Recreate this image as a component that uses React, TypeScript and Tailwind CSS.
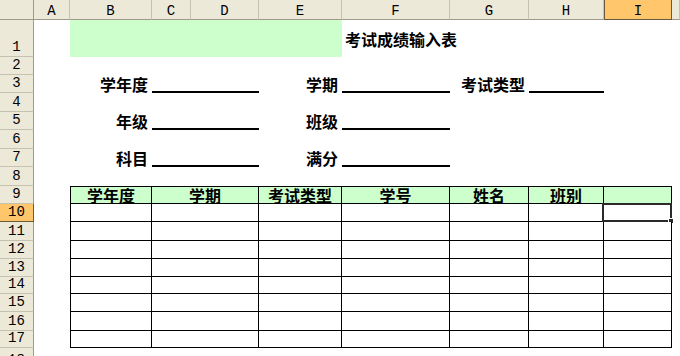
import React from "react";

const colHdr =
  "bg-[#ece9d8] border-r border-b border-r-[#c5c2b2] border-b-[#9d9a8c] flex items-center justify-center text-[14px] leading-none text-black pt-[2px]";
const colHdrSel =
  "bg-[#ffc66b] border-r border-b border-l border-l-[#6b5a3a] border-r-[#6b5a3a] border-b-[#6b5a3a] flex items-center justify-center text-[14px] leading-none text-black pt-[2px]";
const rowHdr =
  "bg-[#ece9d8] border-r border-b border-r-[#9d9a8c] border-b-[#c5c2b2] flex items-end justify-center text-[14px] leading-none text-black pb-[2px]";
const rowHdrSel =
  "bg-[#ffc66b] border-r border-b border-r-[#6b5a3a] border-b-[#6b5a3a] flex items-end justify-center text-[14px] leading-none text-black pb-[2px]";

const label =
  "flex items-end justify-end pr-[4px] text-[16px] leading-[16px] font-bold whitespace-nowrap text-black pb-[1px]";
const line = "border-b-2 border-black";
const th =
  "bg-[#ccffcc] border-t border-r border-b border-black flex items-center justify-center text-[16px] leading-[16px] font-bold text-black whitespace-nowrap";
const td = "border-r border-b border-black bg-white";

const latin = { fontFamily: '"Liberation Mono", "DejaVu Sans Mono", monospace' };

function RH({ n, sel }: { n: number; sel?: boolean }) {
  return (
    <div className={sel ? rowHdrSel : rowHdr} style={latin}>
      {n}
    </div>
  );
}

export default function App() {
  const letters = ["A", "B", "C", "D", "E", "F", "G", "H"];
  const dataRows = [10, 11, 12, 13, 14, 15, 16, 17];
  return (
    <div
      className="w-[680px] h-[356px] overflow-hidden bg-white grid grid-cols-[34px_36px_82px_39px_68px_83px_108px_79px_75px_68px_8px] grid-rows-[20px_37px_18px_18px_19px_18px_19px_18px_19px_18px_18px_19px_18px_18px_17px_18px_19px_17px_8px]"
      style={{ fontFamily: '"Noto Sans CJK SC", "Noto Sans", sans-serif' }}
    >
      {/* column header row */}
      <div className="bg-[#ece9d8] border-r border-b border-r-[#9d9a8c] border-b-[#9d9a8c]" />
      {letters.map((l) => (
        <div key={l} className={colHdr} style={latin}>
          {l}
        </div>
      ))}
      <div className={colHdrSel} style={latin}>
        I
      </div>
      <div className={colHdr} />

      {/* row 1 */}
      <RH n={1} />
      <div />
      <div className="col-span-4 bg-[#ccffcc]" />
      <div className="flex items-center pl-[3px] pt-[1px] text-[16px] leading-[16px] font-bold whitespace-nowrap text-black overflow-visible">
        考试成绩输入表
      </div>
      <div className="col-span-4" />

      {/* row 2 */}
      <RH n={2} />
      <div className="col-span-10" />

      {/* row 3 */}
      <RH n={3} />
      <div />
      <div className={label}>学年度</div>
      <div className={`col-span-2 ${line}`} />
      <div className={label}>学期</div>
      <div className={line} />
      <div className={label}>考试类型</div>
      <div className={line} />
      <div className="col-span-2" />

      {/* row 4 */}
      <RH n={4} />
      <div className="col-span-10" />

      {/* row 5 */}
      <RH n={5} />
      <div />
      <div className={label}>年级</div>
      <div className={`col-span-2 ${line}`} />
      <div className={label}>班级</div>
      <div className={line} />
      <div className="col-span-4" />

      {/* row 6 */}
      <RH n={6} />
      <div className="col-span-10" />

      {/* row 7 */}
      <RH n={7} />
      <div />
      <div className={label}>科目</div>
      <div className={`col-span-2 ${line}`} />
      <div className={label}>满分</div>
      <div className={line} />
      <div className="col-span-4" />

      {/* row 8 */}
      <RH n={8} />
      <div className="col-span-10" />

      {/* row 9: table header */}
      <RH n={9} />
      <div />
      <div className={`${th} border-l`}>学年度</div>
      <div className={`${th} col-span-2`}>学期</div>
      <div className={th}>考试类型</div>
      <div className={th}>学号</div>
      <div className={th}>姓名</div>
      <div className={th}>班别</div>
      <div className={th} />
      <div />

      {/* data rows */}
      {dataRows.map((n) => (
        <React.Fragment key={n}>
          <RH n={n} sel={n === 10} />
          <div />
          <div className={`${td} border-l`} />
          <div className={`${td} col-span-2`} />
          <div className={td} />
          <div className={td} />
          <div className={td} />
          <div className={td} />
          <div className={`${td} relative`}>
            {n === 10 && (
              <>
                <div className="absolute -left-[2px] -top-px -right-px -bottom-px border-2 border-[#2a2a2a]" />
                <div className="absolute -right-[3px] -bottom-[3px] w-[6px] h-[6px] bg-[#2a2a2a] border border-white" />
              </>
            )}
          </div>
          <div />
        </React.Fragment>
      ))}

      {/* row 18 (partial, cut off by the window) */}
      <div
        className="bg-[#ece9d8] border-r border-r-[#9d9a8c] flex items-start justify-center overflow-hidden text-[14px] leading-none text-black pt-[5px]"
        style={latin}
      >
        18
      </div>
      <div className="col-span-10" />
    </div>
  );
}
